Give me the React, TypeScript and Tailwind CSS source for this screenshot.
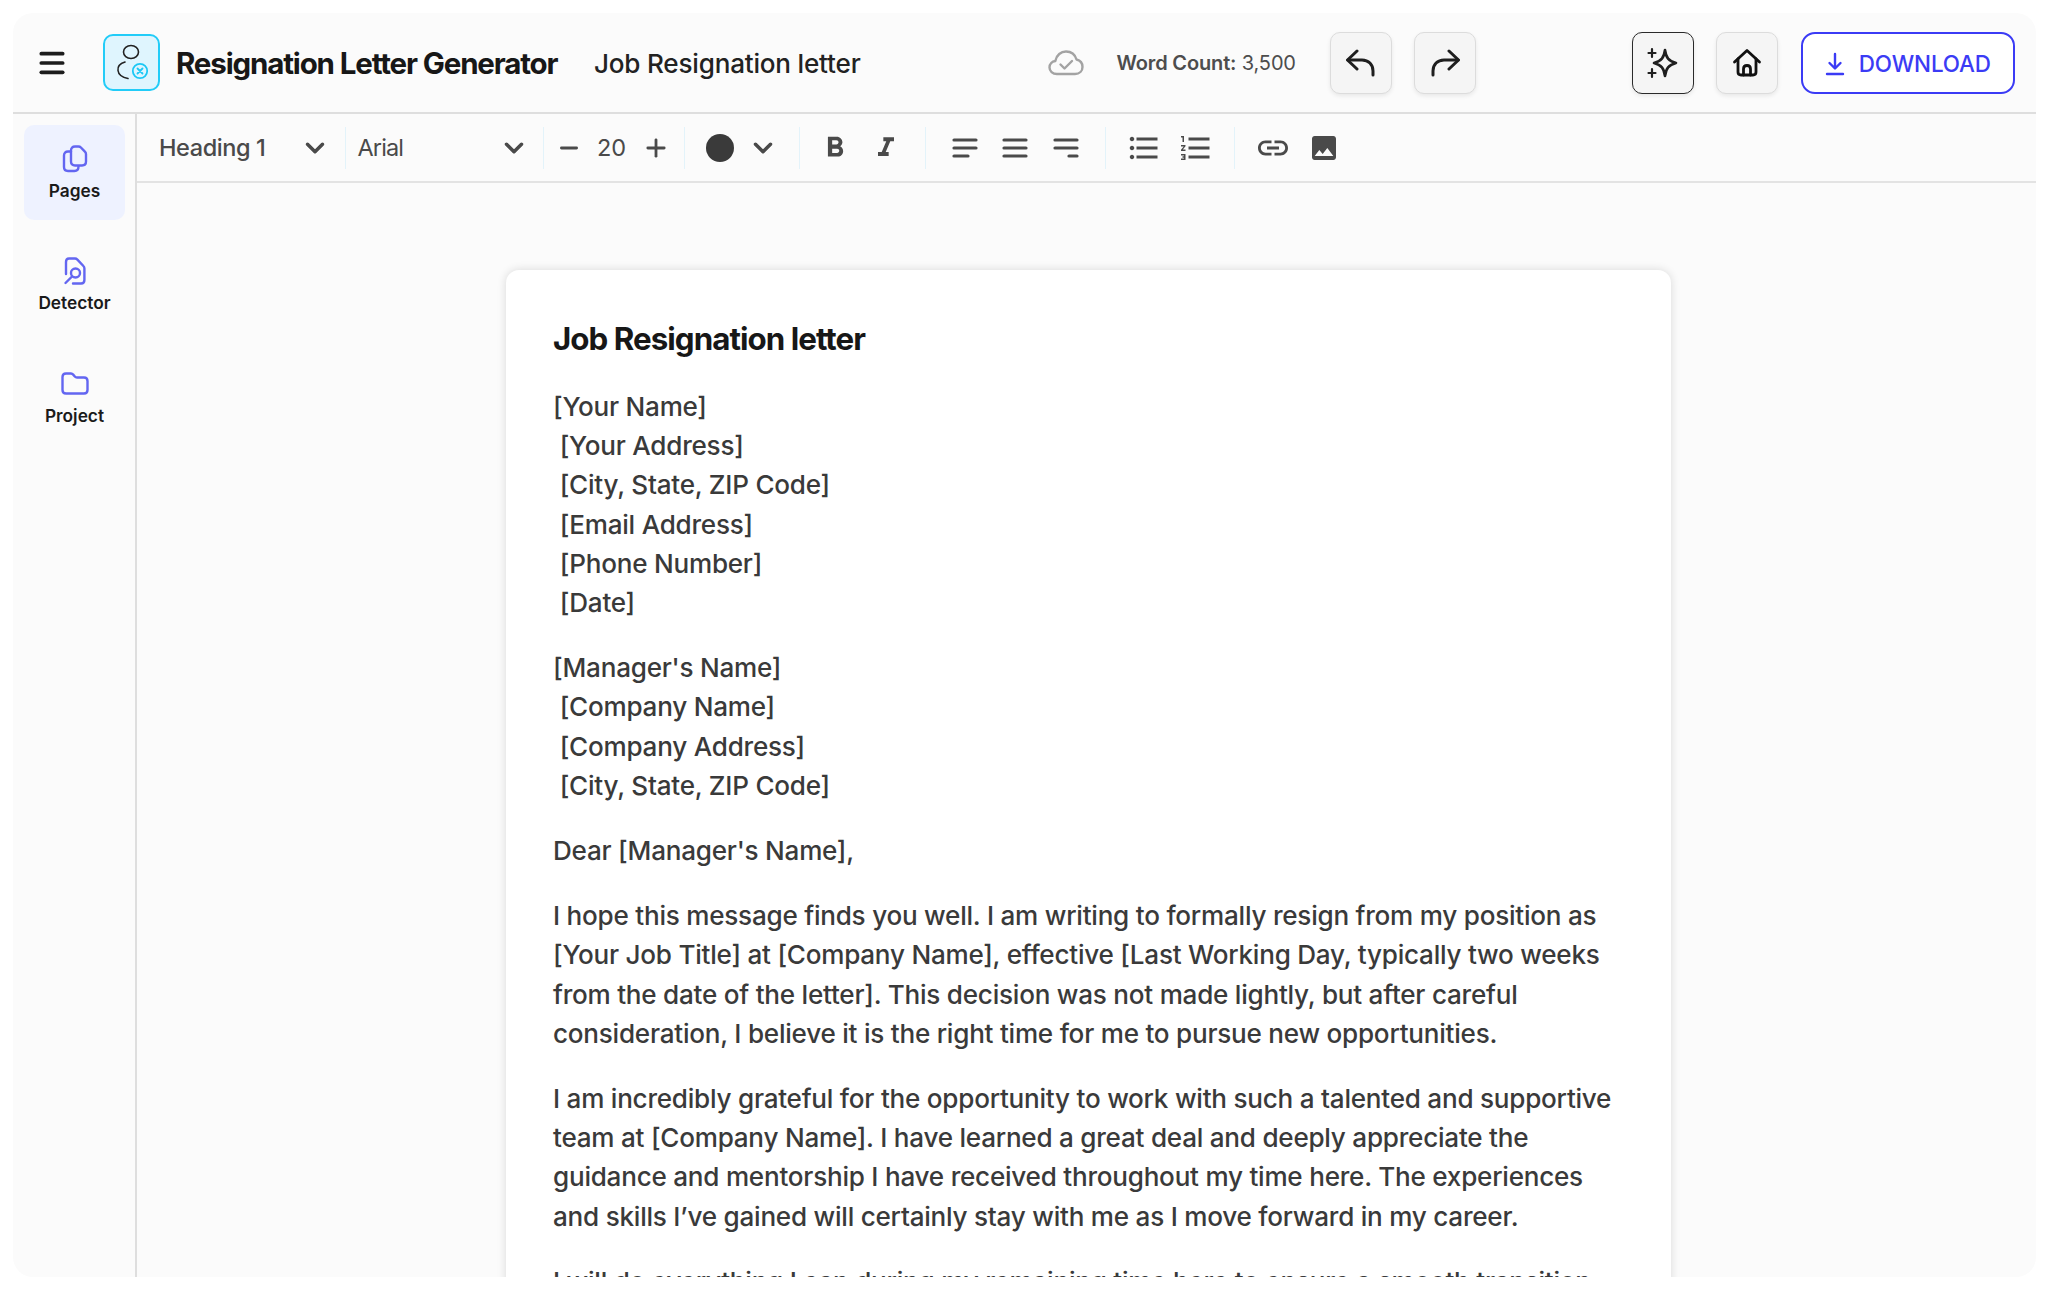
import { ChevronDown, Minus, Plus, Menu } from "lucide-react";
import {
  MdFormatBold,
  MdFormatItalic,
  MdFormatListBulleted,
  MdFormatListNumbered,
  MdLink,
  MdImage,
} from "react-icons/md";

const navStroke = "#6366f1";

function LogoIcon() {
  return (
    <svg width="44" height="44" viewBox="0 0 44 44" fill="none">
      <ellipse cx="21" cy="11" rx="7.5" ry="6.5" stroke="#222" strokeWidth="1.6" />
      <path d="M15 21c-5 1.5-7.5 5-7 8.5.5 4 4.5 7 10 8" stroke="#222" strokeWidth="1.6" strokeLinecap="round" />
      <circle cx="30" cy="30" r="7.2" stroke="#1cc8f5" strokeWidth="1.8" />
      <path d="M27.5 27.5l5 5M32.5 27.5l-5 5" stroke="#1cc8f5" strokeWidth="1.8" strokeLinecap="round" />
    </svg>
  );
}

function PagesIcon() {
  return (
    <svg width="26" height="28" viewBox="0 0 26 28" fill="none" stroke={navStroke} strokeWidth="2.4" strokeLinejoin="round">
      <path d="M9 5.500C9 3 10.500 1.500 13 1.500h3.500c1 0 1.700.3 2.400 1l4 4.200c.7.7 1.100 1.500 1.100 2.500v7.300c0 2.500-1.600 4-4 4H13c-2.500 0-4-1.500-4-4z" />
      <path d="M9 6.500H6C3.500 6.500 2 8 2 10.500V22c0 2.500 1.500 4 4 4h6.500c2.500 0 4-1.500 4-4.500" strokeLinecap="round" />
    </svg>
  );
}

function DetectorIcon() {
  return (
    <svg width="24" height="28" viewBox="0 0 24 28" fill="none" stroke={navStroke} strokeWidth="2.4" strokeLinecap="round" strokeLinejoin="round">
      <path d="M3 17V5c0-2 1-3.500 3-3.500h6c1 0 1.700.4 2.400 1.100l6 6.400c.7.7 1 1.400 1 2.400v11.600c0 2-1.200 3.500-3.300 3.500H10" />
      <circle cx="12.500" cy="16" r="4.500" />
      <path d="M9 19.500L2.500 26" />
    </svg>
  );
}

function FolderIcon() {
  return (
    <svg width="28" height="24" viewBox="0 0 28 24" fill="none" stroke={navStroke} strokeWidth="2.4" strokeLinejoin="round">
      <path d="M1.500 5c0-2 1.500-3.500 3.500-3.500h5c1 0 1.600.4 2.200 1.100l1.600 1.900c.6.700 1.200 1 2.200 1H23c2 0 3.500 1.500 3.500 3.500v9c0 2.200-1.500 3.500-3.500 3.500H5c-2 0-3.500-1.300-3.500-3.500z" />
    </svg>
  );
}

function CloudIcon() {
  return (
    <svg width="36" height="26" viewBox="0 0 36 26" fill="none" stroke="#a3a3a3" strokeWidth="2.4" strokeLinecap="round" strokeLinejoin="round">
      <path d="M9 24C4.500 24 1.500 21 1.500 17.500c0-3.500 2.600-6 5.800-6.500C8.500 5 13 1.500 18 1.500c5 0 9 3 10.500 8 3.500.8 6 3.700 6 7.500 0 4-3 7-7.500 7z" />
      <path d="M12.500 14.500l4 4 7.500-7.500" />
    </svg>
  );
}

function UndoIcon({ flip }: { flip?: boolean }) {
  return (
    <svg width="32" height="28" viewBox="0 0 32 28" fill="none" stroke="#1f1f1f" strokeWidth="3" strokeLinecap="round" strokeLinejoin="round" className={flip ? "-scale-x-100" : ""}>
      <path d="M12 2L2.500 11 12 20" />
      <path d="M3 11h14c6.500 0 11 4.500 11 11v4" />
    </svg>
  );
}

function SparkleIcon() {
  return (
    <svg width="32" height="32" viewBox="0 0 32 32" fill="none" stroke="#1f1f1f" strokeWidth="2.6" strokeLinejoin="round" strokeLinecap="round">
      <path d="M18 3c1 7.500 3.500 11 11 13-7.500 2-10 5.500-11 13-1-7.500-3.500-11-11-13 7.500-2 10-5.500 11-13z" />
      <path d="M5 2v8M1.500 6h7M5 22v8M1.500 26h7" strokeWidth="2.2" />
    </svg>
  );
}

function HomeIcon() {
  return (
    <svg width="30" height="30" viewBox="0 0 30 30" fill="none" stroke="#111" strokeWidth="2.8" strokeLinejoin="round" strokeLinecap="round">
      <path d="M2.500 14L15 2.500 27.500 14" />
      <path d="M6 11v13c0 2 1 3 3 3h12c2 0 3-1 3-3V11" />
      <path d="M11.500 27v-6c0-2.300 1.300-3.500 3.500-3.500s3.500 1.200 3.500 3.500v6" />
    </svg>
  );
}

function DownloadIcon() {
  return (
    <svg width="20" height="24" viewBox="0 0 20 24" fill="none" stroke="#3b3bf5" strokeWidth="2.4" strokeLinecap="round" strokeLinejoin="round">
      <path d="M10 2v14M4.500 11L10 16.500 15.500 11" />
      <path d="M2 22h16" />
    </svg>
  );
}

function AlignIcon({ kind }: { kind: "left" | "center" | "right" }) {
  return (
    <svg width="26" height="22" viewBox="0 0 26 22" fill="none" stroke="#4a4a4a" strokeWidth="3.2" strokeLinecap="round">
      <path d="M2 3h22M2 11h22" />
      {kind === "left" && <path d="M2 19h14" />}
      {kind === "center" && <path d="M2 19h22" />}
      {kind === "right" && <path d="M16 19h8" />}
    </svg>
  );
}

function NavItem({ label, icon, active }: { label: string; icon: React.ReactNode; active?: boolean }) {
  return (
    <div className={`flex h-[95px] w-[101px] flex-col items-center justify-center gap-[6px] rounded-[10px] ${active ? "bg-[#eef2ff]" : ""}`}>
      <div className="flex h-[30px] items-center">{icon}</div>
      <span className="text-[17.300px] leading-[22px] font-semibold text-[#1a1a1a]">{label}</span>
    </div>
  );
}

function SquareButton({ children, dark }: { children: React.ReactNode; dark?: boolean }) {
  return (
    <button className={`flex h-[62px] w-[62px] shrink-0 items-center justify-center rounded-[10px] border-[1.5px] bg-[#f5f5f5] shadow-[0_2px_4px_rgba(0,0,0,0.08)] ${dark ? "border-[#2a2a2a]" : "border-[#dcdcdc]"}`}>
      {children}
    </button>
  );
}

function Divider({ className }: { className: string }) {
  return <div className={`h-[42px] w-px shrink-0 bg-[#e3f3fa] ${className}`} />;
}

const toolIcon = "shrink-0 text-[#4a4a4a]";

export default function App() {
  return (
    <div className="h-[1289px] w-[2048px] overflow-hidden bg-white p-[13px] font-['Inter',sans-serif]">
      <div className="flex h-[1264px] w-[2023px] flex-col overflow-hidden rounded-[20px] bg-[#fbfbfb]">
        {/* top bar */}
        <header className="flex h-[101px] shrink-0 items-center border-b-2 border-[#dedede]">
          <Menu size={32} strokeWidth={2.8} className="ml-[23px] shrink-0 text-[#1c1c1c]" />
          <div className="ml-[35px] flex h-[57px] w-[57px] shrink-0 items-center justify-center rounded-[10px] border-2 border-[#22ccf8] bg-[#dff5fe]">
            <LogoIcon />
          </div>
          <h1 className="mt-[3px] ml-[16px] text-[29.500px] leading-none font-bold tracking-[-1.150px] whitespace-nowrap text-[#171717]">
            Resignation Letter Generator
          </h1>
          <span className="mt-[3px] ml-[36.500px] text-[26.100px] leading-none font-medium tracking-[-0.200px] whitespace-nowrap text-[#222]">
            Job Resignation letter
          </span>
          <div className="ml-[187px] shrink-0">
            <CloudIcon />
          </div>
          <span className="ml-[33px] text-[20px] tracking-[-0.150px] whitespace-nowrap text-[#4d4d4d]">
            <span className="font-semibold">Word Count:</span> 3,500
          </span>
          <div className="ml-[34px] flex gap-[22px]">
            <SquareButton>
              <UndoIcon />
            </SquareButton>
            <SquareButton>
              <UndoIcon flip />
            </SquareButton>
          </div>
          <div className="ml-[156px] flex gap-[22px]">
            <SquareButton dark>
              <SparkleIcon />
            </SquareButton>
            <SquareButton>
              <HomeIcon />
            </SquareButton>
          </div>
          <button className="ml-[23px] flex h-[62px] w-[214px] shrink-0 items-center justify-center gap-[14px] rounded-[14px] border-2 border-[#3b3bf5] bg-white pt-[2px] text-[22.400px] font-medium tracking-[-0.100px] text-[#3b3bf5]">
            <DownloadIcon />
            DOWNLOAD
          </button>
        </header>

        <div className="flex min-h-0 flex-1">
          {/* sidebar */}
          <aside className="flex w-[124px] shrink-0 flex-col gap-[17.500px] border-r-2 border-[#dedede] pt-[11px] pl-[11px]">
            <NavItem label="Pages" icon={<PagesIcon />} active />
            <NavItem label="Detector" icon={<DetectorIcon />} />
            <NavItem label="Project" icon={<FolderIcon />} />
          </aside>

          <div className="flex min-w-0 flex-1 flex-col">
            {/* toolbar */}
            <div className="flex h-[69px] shrink-0 items-center border-b-2 border-[#e3e3e3] text-[23.500px] text-[#4a4a4a]">
              <span className="ml-[22px] w-[140.500px] shrink-0 font-medium tracking-[-0.400px]">Heading 1</span>
              <ChevronDown size={30} strokeWidth={2.8} className={toolIcon} />
              <Divider className="ml-[15px]" />
              <span className="ml-[12px] w-[141px] shrink-0 tracking-[-0.900px]">Arial</span>
              <ChevronDown size={30} strokeWidth={2.8} className={toolIcon} />
              <Divider className="ml-[14px]" />
              <Minus size={26} strokeWidth={2.6} className={`ml-[12px] ${toolIcon}`} />
              <span className="ml-[14px] w-[32px] shrink-0 text-center">20</span>
              <Plus size={28} strokeWidth={2.4} className={`ml-[14px] ${toolIcon}`} />
              <Divider className="ml-[14px]" />
              <div className="ml-[21px] h-[28px] w-[28px] shrink-0 rounded-full bg-[#3a3a3a]" />
              <ChevronDown size={30} strokeWidth={2.8} className={`ml-[14px] ${toolIcon}`} />
              <Divider className="ml-[21px]" />
              <MdFormatBold size={34} className={`ml-[18.500px] ${toolIcon}`} />
              <MdFormatItalic size={32} className={`ml-[18px] ${toolIcon}`} />
              <Divider className="ml-[23px]" />
              <div className="ml-[25.500px] shrink-0">
                <AlignIcon kind="left" />
              </div>
              <div className="ml-[24.500px] shrink-0">
                <AlignIcon kind="center" />
              </div>
              <div className="ml-[25px] shrink-0">
                <AlignIcon kind="right" />
              </div>
              <Divider className="ml-[26px]" />
              <MdFormatListBulleted size={36} className={`ml-[20px] ${toolIcon}`} />
              <MdFormatListNumbered size={36} className={`ml-[15.600px] ${toolIcon}`} />
              <Divider className="ml-[20.400px]" />
              <MdLink size={36} className={`ml-[20px] ${toolIcon}`} />
              <MdImage size={32} className={`ml-[17px] ${toolIcon}`} />
            </div>

            {/* document */}
            <div className="min-h-0 flex-1 overflow-hidden pt-[87px] pl-[369px]">
              <article className="w-[1165px] rounded-t-[13px] bg-white px-[47px] pt-[47px] text-[26.100px] leading-[39.200px] font-medium tracking-[-0.240px] text-[#3a3a3a] shadow-[0_0_10px_rgba(0,0,0,0.14)]">
                <h2 className="mb-[26px] text-[31.300px] leading-[44px] font-bold tracking-[-0.950px] text-[#171717]">
                  Job Resignation letter
                </h2>
                <p className="mb-[26px]">
                  [Your Name]
                  <br />
                  &nbsp;[Your Address]
                  <br />
                  &nbsp;[City, State, ZIP Code]
                  <br />
                  &nbsp;[Email Address]
                  <br />
                  &nbsp;[Phone Number]
                  <br />
                  &nbsp;[Date]
                </p>
                <p className="mb-[26px]">
                  [Manager's Name]
                  <br />
                  &nbsp;[Company Name]
                  <br />
                  &nbsp;[Company Address]
                  <br />
                  &nbsp;[City, State, ZIP Code]
                </p>
                <p className="mb-[26px]">Dear [Manager's Name],</p>
                <p className="mb-[26px]">
                  I hope this message finds you well. I am writing to formally resign from my position as [Your Job Title] at [Company Name], effective [Last Working Day, typically two weeks from the date of the letter]. This decision was not made lightly, but after careful consideration, I believe it is the right time for me to pursue new opportunities.
                </p>
                <p className="mb-[26px]">
                  I am incredibly grateful for the opportunity to work with such a talented and supportive team at [Company Name]. I have learned a great deal and deeply appreciate the guidance and mentorship I have received throughout my time here. The experiences and skills I’ve gained will certainly stay with me as I move forward in my career.
                </p>
                <p>I will do everything I can during my remaining time here to ensure a smooth transition</p>
              </article>
            </div>
          </div>
        </div>
      </div>
    </div>
  );
}
